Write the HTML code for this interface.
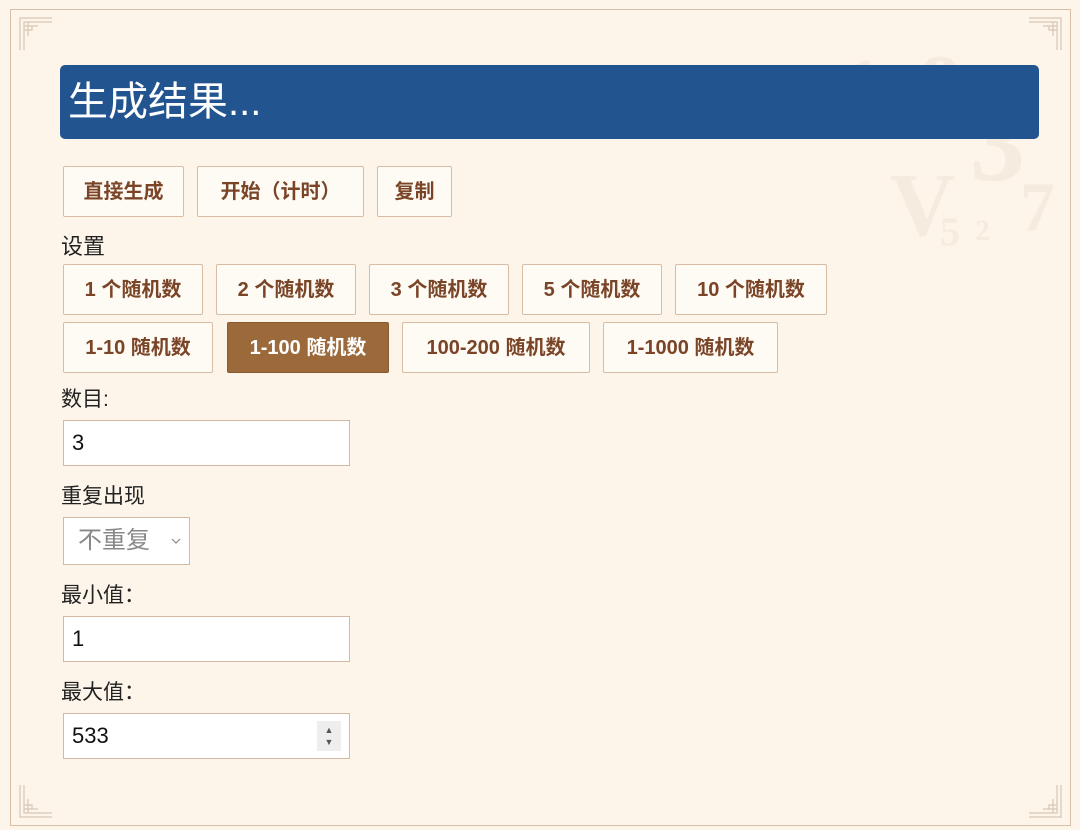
<!DOCTYPE html>
<html><head><meta charset="utf-8"><style>
*{box-sizing:border-box;margin:0;padding:0}
body{width:1080px;height:830px;background:#fdf5ea;font-family:"Liberation Sans","Noto Sans CJK SC",sans-serif;position:relative;overflow:hidden}
.frame{position:absolute;left:10px;top:9px;width:1061px;height:817px;border:1.5px solid #d8c0a8}
.hdr{position:absolute;left:60px;top:65px;width:979px;height:74px;background:#22548f;border-radius:5px;color:#fff;font-size:40px;line-height:74px;padding-left:8px}
.btn{position:absolute;height:51px;border:1.5px solid #d8bca4;background:#fefaf4;color:#7a4427;font-weight:bold;font-size:20px;line-height:51px;text-align:center;border-radius:2px}
.act{background:#9c693a;color:#fff;border-color:#8a5a30}
.lbl{position:absolute;left:61px;font-size:21px;color:#222}
.inp{position:absolute;left:63px;width:287px;height:46px;border:1.5px solid #d3b8a6;background:#fff;font-size:22px;line-height:43px;padding-left:8px;color:#111}
.corner{position:absolute;width:36px;height:36px}
</style></head><body>
<div class="frame"></div>
<svg class="corner" style="left:18px;top:16px" viewBox="0 0 36 36" fill="none" stroke="#d8c6b4" stroke-width="1.2"><path d="M2 34V2H34M6 34V6H34M6 10H20M10 6V20M6 14H14V10"/></svg>
<svg class="corner" style="left:1027px;top:16px" viewBox="0 0 36 36" fill="none" stroke="#d8c6b4" stroke-width="1.2"><path d="M2 2H34V34M2 6H30V34M30 10H16M26 6V20M30 14H22V10"/></svg>
<svg class="corner" style="left:18px;top:783px" viewBox="0 0 36 36" fill="none" stroke="#d8c6b4" stroke-width="1.2"><path d="M2 2V34H34M6 2V30H34M6 26H20M10 30V16M6 22H14V26"/></svg>
<svg class="corner" style="left:1027px;top:783px" viewBox="0 0 36 36" fill="none" stroke="#d8c6b4" stroke-width="1.2"><path d="M34 2V34H2M30 2V30H2M30 26H16M26 30V16M30 22H22V26"/></svg>
<svg style="position:absolute;left:800px;top:10px" width="270" height="250" viewBox="0 0 270 250" fill="#efe4d6" opacity="0.55" font-family="Liberation Serif,serif" font-weight="bold"><text x="40" y="110" font-size="90">1</text><text x="170" y="170" font-size="110">3</text><text x="90" y="225" font-size="90">V</text><text x="140" y="235" font-size="40">5</text><text x="175" y="230" font-size="30">2</text><text x="220" y="220" font-size="70">7</text><text x="120" y="100" font-size="80">8</text></svg>
<div class="hdr">生成结果...</div>
<div class="btn" style="left:63px;top:166px;width:121px">直接生成</div>
<div class="btn" style="left:197px;top:166px;width:167px">开始（计时）</div>
<div class="btn" style="left:377px;top:166px;width:75px">复制</div>
<div class="lbl" style="top:229px;font-size:22px">设置</div>
<div class="btn" style="left:63px;top:264px;width:140px">1 个随机数</div>
<div class="btn" style="left:216px;top:264px;width:140px">2 个随机数</div>
<div class="btn" style="left:369px;top:264px;width:140px">3 个随机数</div>
<div class="btn" style="left:522px;top:264px;width:140px">5 个随机数</div>
<div class="btn" style="left:675px;top:264px;width:152px">10 个随机数</div>
<div class="btn" style="left:63px;top:322px;width:150px">1-10 随机数</div>
<div class="btn act" style="left:227px;top:322px;width:162px">1-100 随机数</div>
<div class="btn" style="left:402px;top:322px;width:188px">100-200 随机数</div>
<div class="btn" style="left:603px;top:322px;width:175px">1-1000 随机数</div>
<div class="lbl" style="top:383px">数目:</div>
<div class="inp" style="top:420px">3</div>
<div class="lbl" style="top:480px">重复出现</div>
<div style="position:absolute;left:63px;top:517px;width:127px;height:48px;border:1.5px solid #d3b8a6;background:#fff;color:#888;font-size:24px;line-height:45px;padding-left:14px">不重复<svg style="position:absolute;right:8px;top:20px" width="10" height="6" viewBox="0 0 10 6" fill="none" stroke="#888" stroke-width="1.2"><path d="M1 1L5 5L9 1"/></svg></div>
<div class="lbl" style="top:579px">最小值：</div>
<div class="inp" style="top:616px">1</div>
<div class="lbl" style="top:676px">最大值：</div>
<div class="inp" style="top:713px">533<div style="position:absolute;right:8px;top:7px;width:24px;height:30px;background:#eee;color:#555;font-size:9px;line-height:12px;text-align:center;padding-top:3px">▲<br>▼</div></div>
</body></html>
